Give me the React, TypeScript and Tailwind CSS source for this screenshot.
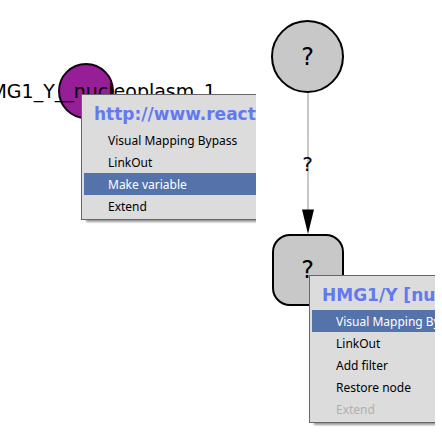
type MenuItem = { label: string; state?: 'active' | 'disabled' };

function itemClass(state?: MenuItem['state']) {
  const base =
    "block h-[22px] w-full whitespace-nowrap pl-6 text-left font-['Noto_Sans',sans-serif] text-[12px] leading-6";
  if (state === 'active') return `${base} bg-[#5573ab] text-white`;
  if (state === 'disabled') return `${base} text-[#b0b0b0]`;
  return `${base} text-black`;
}

function ContextMenu({ title, items, place }: { title: string; items: MenuItem[]; place: string }) {
  return (
    <div
      role="menu"
      aria-label={title}
      className={`absolute w-80 border border-[#666666] bg-[#dcdcdc] p-0.5 shadow-[4px_3px_2px_-1px_#999999] ${place}`}
    >
      <h2 className="h-8 whitespace-nowrap pl-2.5 text-[17px] font-bold leading-[34px] text-[#6279ef]">{title}</h2>
      {items.map((item) => (
        <button
          key={item.label}
          type="button"
          role="menuitem"
          disabled={item.state === 'disabled'}
          className={itemClass(item.state)}
        >
          {item.label}
        </button>
      ))}
    </div>
  );
}

export default function App() {
  return (
    <main className="flex h-screen bg-white font-['DejaVu_Sans',sans-serif] text-black">
      <section aria-label="Instance graph" className="relative w-64 shrink-0 overflow-hidden">
        <div className="absolute left-[58px] top-[63px] flex size-14 items-center justify-center rounded-full border-2 border-[#160016] bg-[#961e96]">
          <span className="whitespace-nowrap pl-5 text-[19px] leading-6">HMG1_Y__nucleoplasm_1</span>
        </div>
        <ContextMenu
          title="http://www.reactome.org"
          place="left-[81px] top-[94px]"
          items={[
            { label: 'Visual Mapping Bypass' },
            { label: 'LinkOut' },
            { label: 'Make variable', state: 'active' },
            { label: 'Extend' },
          ]}
        />
      </section>

      <section aria-label="Variable graph" className="relative w-[179px] shrink-0 overflow-hidden pt-5">
        <div className="flex w-[103px] flex-col items-center">
          <div className="flex size-[73px] items-center justify-center rounded-full border-2 border-black bg-[#c8c8c8] text-[24px]">
            ?
          </div>
          <div className="relative">
            <svg width="21" height="141" viewBox="0 0 21 141" aria-hidden="true">
              <path d="M11 0V118" stroke="#c8c8c8" strokeWidth="2" />
              <path d="M5 116.500H17L11 141Z" fill="#000" />
            </svg>
            <span className="absolute inset-x-0 top-[59px] text-center text-[20px] leading-6">?</span>
          </div>
          <div className="flex size-[72px] items-center justify-center rounded-[18px] border-2 border-black bg-[#c8c8c8] text-[24px]">
            ?
          </div>
        </div>
        <ContextMenu
          title="HMG1/Y [nucleoplasm]"
          place="left-[53px] top-[275px]"
          items={[
            { label: 'Visual Mapping Bypass', state: 'active' },
            { label: 'LinkOut' },
            { label: 'Add filter' },
            { label: 'Restore node' },
            { label: 'Extend', state: 'disabled' },
          ]}
        />
      </section>
    </main>
  );
}
